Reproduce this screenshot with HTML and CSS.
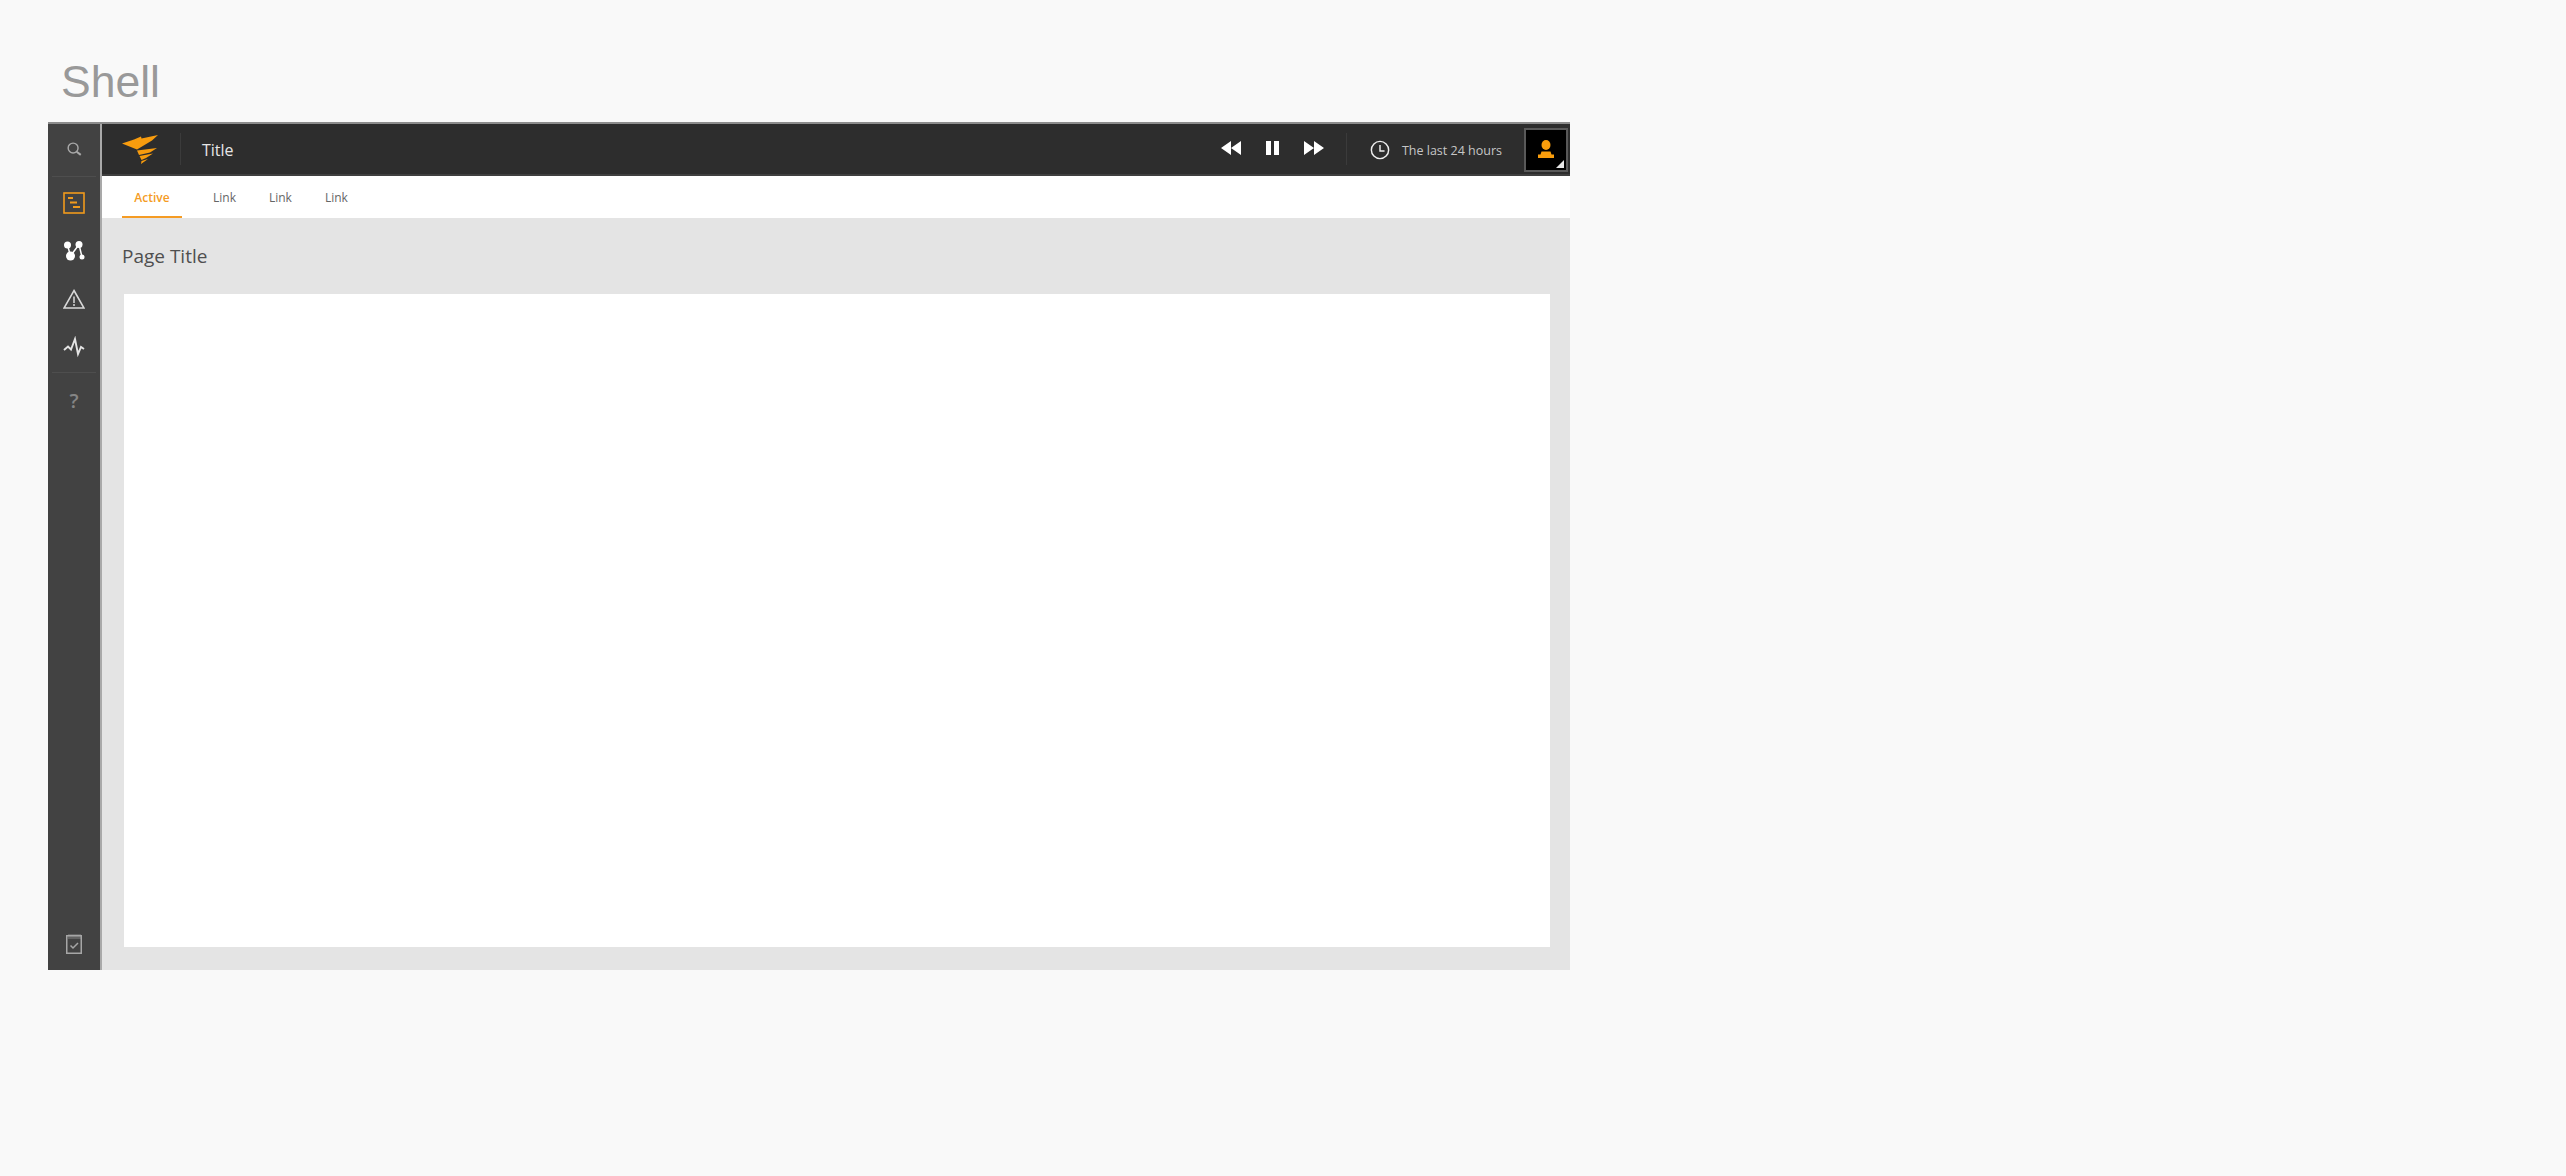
FILE: index.html
```html
<!DOCTYPE html>
<html lang="en">
<head>
<meta charset="utf-8">
<title>Shell</title>
<link rel="stylesheet" href="styles.css">
</head>
<body>
<h1 class="heading">Shell</h1>
<div class="shell">
  <nav class="side">
    <div class="side-search">
      <svg class="ic" viewBox="0 0 20 20"><circle cx="9" cy="9" r="5.5" fill="none" stroke="#a8a8a8" stroke-width="1.6"/><path d="M13 13l4.5 3.5" stroke="#a8a8a8" stroke-width="2.2" fill="none"/></svg>
    </div>
    <div class="side-main">
      <svg class="ic-l" viewBox="0 0 22 22"><rect x="1" y="1" width="20" height="20" fill="none" stroke="#f19a1c" stroke-width="1.6"/><path d="M5 6h5M7 10.500h7M10 15h7" stroke="#f19a1c" stroke-width="2" fill="none"/></svg>
      <svg class="ic-l" viewBox="0 0 22 22"><g fill="#fff"><circle cx="4.500" cy="5" r="3.500"/><circle cx="16" cy="4.500" r="3.500"/><circle cx="7.500" cy="16" r="4.500"/><circle cx="19" cy="17" r="2.500"/></g><path d="M4.500 5l3 11L16 4.500 19 17" stroke="#fff" stroke-width="1.500" fill="none"/></svg>
      <svg class="ic-l" viewBox="0 0 22 22"><path d="M11 2.500L21 20H1z" fill="none" stroke="#d8d8d8" stroke-width="1.600"/><path d="M11 8.500v6.500M11 16v2" stroke="#d8d8d8" stroke-width="1.500"/></svg>
      <svg class="ic-l" viewBox="0 0 22 22"><path d="M1 14l4-3.500 3 3L12 3l3 15 3-7 3 2" fill="none" stroke="#e4e4e4" stroke-width="1.900"/></svg>
    </div>
    <div class="side-help">?</div>
    <div class="side-end">
      <svg class="ic-l" viewBox="0 0 22 22"><path d="M5 2h13v5H5z" fill="#626262"/><path d="M3.750 3.750h14.500v17.500H3.750z" fill="none" stroke="#a6a6a6" stroke-width="1.500"/><path d="M7.500 13.500l2.500 2.500 5-5" fill="none" stroke="#a6a6a6" stroke-width="1.500"/></svg>
    </div>
  </nav>
  <div class="main">
    <header class="top">
      <svg class="logo" viewBox="0 0 36 29"><path fill="#f89c0e" d="M0 8.500L12 4.500 19 1.500 19.500 3.500 36 0 30 5.500 15 14.500z"/><path fill="#f89c0e" d="M15 15.500L35 13 28 17.500 17 20zM17.500 21L31 18.500 24 23 19.500 25zM19.500 26L26 24 19 29z"/></svg>
      <span class="top-title">Title</span>
      <div class="controls">
        <svg class="ctl" viewBox="0 0 20 14"><path fill="#fff" d="M10 0v14L0 7zM20 0v14L10 7z"/></svg>
        <svg class="ctl pause" viewBox="0 0 15 14"><path fill="#fff" d="M1 0h5v14H1zM9 0h5v14H9z"/></svg>
        <svg class="ctl" viewBox="0 0 20 14"><path fill="#fff" d="M0 0v14l10-7zM10 0v14l10-7z"/></svg>
      </div>
      <div class="time">
        <svg class="clock" viewBox="0 0 22 22"><circle cx="11" cy="11" r="9.500" fill="none" stroke="#eee" stroke-width="1.600"/><path d="M11 5.500V12h5" fill="none" stroke="#eee" stroke-width="1.600"/></svg>
        <span class="time-label">The last 24 hours</span>
      </div>
      <div class="avatar">
        <svg class="person" viewBox="0 0 16 18"><ellipse cx="8" cy="5" rx="4.500" ry="5" fill="#f99d0c"/><path fill="#f99d0c" d="M3.500 11.500h9l1 3H16V18H0v-3.500h2.500z"/></svg>
        <svg class="corner" viewBox="0 0 8 8"><path d="M8 0v8H0z" fill="#e8e8e8"/></svg>
      </div>
    </header>
    <div class="tabs">
      <a class="tab tab-active">Active</a>
      <a class="tab">Link</a>
      <a class="tab">Link</a>
      <a class="tab">Link</a>
    </div>
    <div class="content">
      <h2 class="page-title">Page Title</h2>
      <div class="panel"></div>
    </div>
  </div>
</div>
</body>
</html>
```
FILE: styles.css
```css
* { box-sizing: border-box; }
html, body { margin: 0; height: 100%; }
body {
  background: #f9f9f9;
  padding: 57px 0 0 48px;
  font-family: "Open Sans", sans-serif;
}
.heading {
  margin: 0 0 15px 13px;
  height: 50px;
  font: 400 44.500px/50px "Liberation Sans", Arial, sans-serif;
  color: #999;
}
.shell {
  display: flex;
  width: 1522px;
  height: 848px;
  border-top: 2px solid #8c8c8c;
}
.side {
  width: 54px;
  flex: none;
  display: flex;
  flex-direction: column;
  background: #424242;
  border-right: 2px solid #a9a9a9;
}
.side-search {
  height: 53px;
  margin: 0 4px;
  padding-bottom: 2px;
  display: flex;
  align-items: center;
  justify-content: center;
  border-bottom: 1px solid #4e4e4e;
}
.ic { width: 18px; height: 18px; }
.ic-l { width: 22px; height: 22px; display: block; }
.side-main {
  height: 196px;
  margin: 0 4px;
  padding-top: 15px;
  display: flex;
  flex-direction: column;
  align-items: center;
  gap: 26px;
  border-bottom: 1px solid #4e4e4e;
}
.side-help {
  text-align: center;
  color: #858585;
  font-size: 20px;
  font-weight: 600;
  line-height: 28px;
  padding-top: 14px;
}
.side-end {
  margin-top: auto;
  padding-bottom: 16px;
  display: flex;
  justify-content: center;
}
.main {
  flex: 1;
  display: flex;
  flex-direction: column;
  min-width: 0;
}
.top {
  height: 52px;
  flex: none;
  display: flex;
  align-items: center;
  background: #2d2d2d;
  border-bottom: 2px solid #3f3f3f;
  padding-left: 20px;
}
.logo { width: 36px; height: 29px; flex: none; }
.top-title {
  margin-left: 22px;
  padding: 2px 0 0 21px;
  border-left: 1px solid #3b3b3b;
  font-size: 16px;
  line-height: 30px;
  color: #e6e6e6;
}
.controls {
  margin-left: auto;
  display: flex;
  align-items: center;
  gap: 24px;
  height: 32px;
  padding: 0 22px 2px 0;
  border-right: 1px solid #3b3b3b;
}
.ctl { width: 20px; height: 14px; }
.ctl.pause { width: 15px; }
.time {
  display: flex;
  align-items: center;
  gap: 12px;
  margin: 2px 0 0 23px;
}
.clock { width: 20px; height: 20px; }
.time-label {
  font-size: 12.500px;
  color: #c6c6c6;
  white-space: nowrap;
}
.avatar {
  position: relative;
  width: 44px;
  height: 44px;
  margin: 2px 2px 0 22px;
  background: #000;
  border: 2px solid #595959;
  display: flex;
  align-items: center;
  justify-content: center;
}
.person { width: 16px; height: 18px; margin-top: -2px; }
.corner {
  position: absolute;
  right: 2px;
  bottom: 2px;
  width: 8px;
  height: 8px;
}
.tabs {
  height: 42px;
  flex: none;
  display: flex;
  background: #fff;
  padding-left: 20px;
}
.tab {
  height: 42px;
  display: block;
  margin-right: 33px;
  font-size: 12px;
  line-height: 44px;
  color: #666;
}
.tab-active {
  width: 60px;
  margin-right: 31px;
  text-align: center;
  font-weight: 600;
  color: #f59c24;
  border-bottom: 2px solid #f59c24;
}
.content {
  flex: 1;
  display: flex;
  flex-direction: column;
  background: #e4e4e4;
  padding: 0 20px 23px 20px;
  min-height: 0;
}
.page-title {
  margin: 0;
  height: 76px;
  font-size: 19px;
  font-weight: 400;
  line-height: 76px;
  color: #4f4f4f;
}
.panel {
  flex: 1;
  margin-left: 2px;
  background: #fff;
}
```
